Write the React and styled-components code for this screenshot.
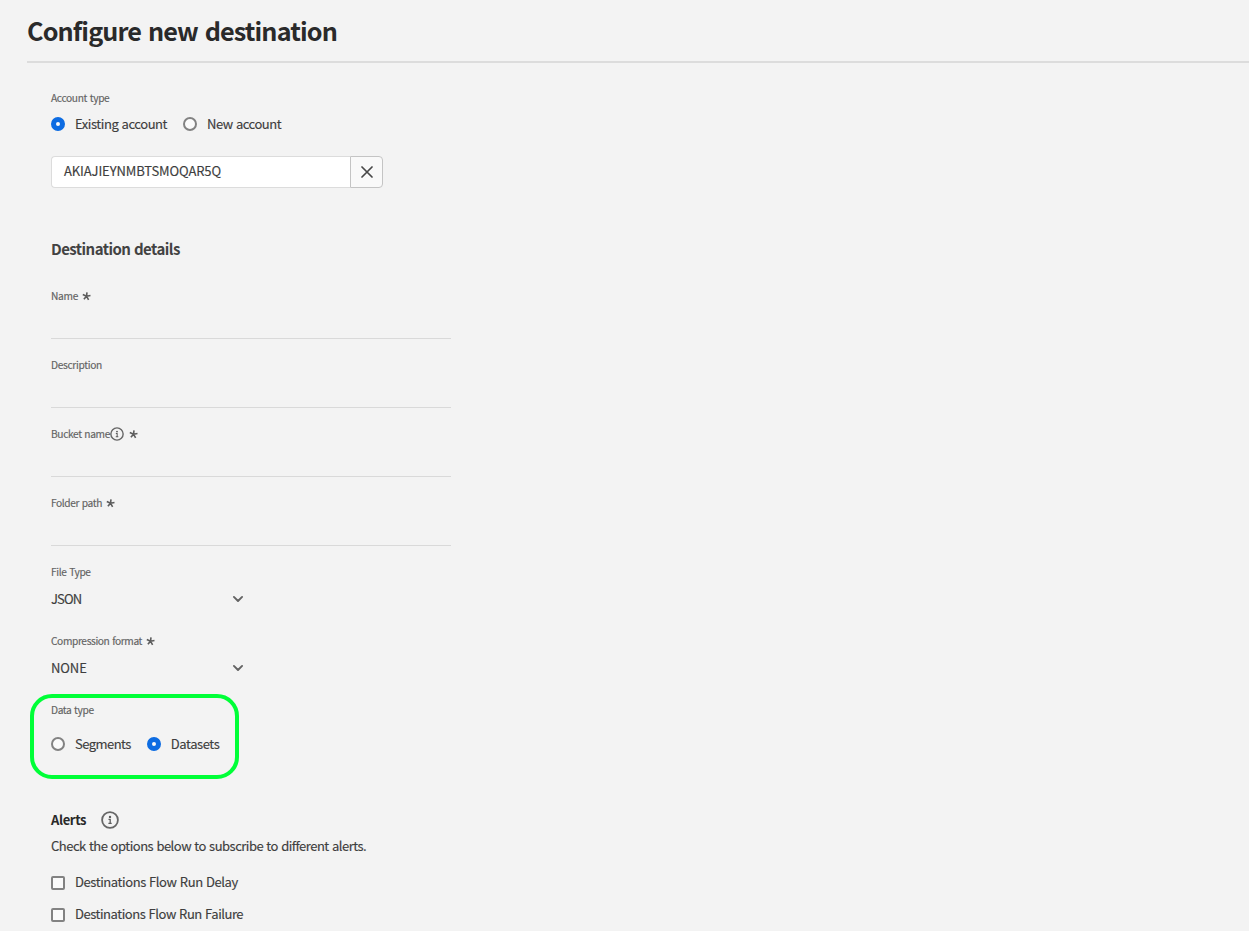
import React from 'react';
import styled, { createGlobalStyle } from 'styled-components';

const GlobalStyle = createGlobalStyle`
  * { box-sizing: border-box; }
  body {
    margin: 0;
    background: #f3f3f3;
    color: #3e3e3e;
    font-family: "Noto Sans CJK JP", "Noto Sans", sans-serif;
    font-size: 13px;
    overflow: hidden;
  }
`;

const Page = styled.main`
  height: 931px;
  padding-left: 27px;
  overflow: hidden;
`;

const Header = styled.header`
  height: 63px;
  border-bottom: 2px solid #dcdcdc;
`;

const Title = styled.h1`
  margin: 0;
  font-size: 25.2px;
  line-height: 61px;
  font-weight: 700;
  color: #2a2a2a;
  white-space: nowrap;
  word-spacing: 2px;
`;

const Text = styled.span`
  letter-spacing: ${(p) => p.$ls ?? -0.44}px;
  white-space: nowrap;
  -webkit-text-stroke: ${(p) => (p.$plain ? 0 : 0.15)}px currentColor;
`;

const Form = styled.form`
  display: flex;
  flex-direction: column;
  align-items: flex-start;
  padding: 27px 0 0 24px;
  word-spacing: 0.8px;
`;

const Label = styled.div`
  display: flex;
  align-items: center;
  height: 16px;
  font-size: 10.2px;
  line-height: 16px;
  color: #626262;
`;

const RadioGroup = styled.div`
  display: flex;
  align-items: center;
  gap: 16px;
  height: 20px;
  margin-top: ${(p) => p.$top}px;
`;

const Option = styled.label`
  display: flex;
  align-items: center;
  gap: 10px;
  height: 20px;
  line-height: 20px;
`;

const Radio = styled.span`
  width: 14px;
  height: 14px;
  border-radius: 50%;
  background: #fafafa;
  border: ${(p) => (p.$on ? '5px solid #0d6ce2' : '2px solid #828282')};
`;

const Checkbox = styled.span`
  width: 14px;
  height: 14px;
  border: 2px solid #828282;
  border-radius: 2px;
  background: #fafafa;
`;

const AccountPicker = styled.div`
  display: flex;
  width: 332px;
  height: 32px;
  margin-top: 22px;
`;

const AccountValue = styled.div`
  flex: 1;
  padding-left: 12px;
  line-height: 28px;
  background: #fff;
  border: 1px solid #dcdcdc;
  border-right: 0;
  border-radius: 4px 0 0 4px;
`;

const ClearButton = styled.button`
  display: flex;
  align-items: center;
  justify-content: center;
  width: 33px;
  padding: 0;
  background: #f9f9f9;
  border: 1px solid #c4c4c4;
  border-radius: 0 4px 4px 0;
`;

const SectionTitle = styled.h2`
  margin: 50px 0 0;
  height: 23px;
  font-size: 15px;
  line-height: 22px;
  font-weight: 700;
  color: #424242;
`;

const Fields = styled.div`
  margin-top: 27px;
`;

const Field = styled.div`
  width: 400px;
  height: 51px;
  margin-bottom: 18px;
  border-bottom: 1px solid #d9d9d9;
`;

const SelectField = styled.div`
  width: 193px;
  height: ${(p) => (p.$last ? 61 : 69)}px;
`;

const SelectValue = styled.div`
  display: flex;
  align-items: center;
  justify-content: space-between;
  height: 20px;
  margin-top: 9px;
  line-height: 20px;
`;

const Highlight = styled.section`
  width: 209px;
  height: 85px;
  margin: 0 0 0 -21px;
  padding: 4px 0 0 17px;
  border: 4px solid #00ff37;
  border-radius: 22px;
`;

const AlertsHead = styled.div`
  display: flex;
  align-items: center;
  gap: 15px;
  height: 20px;
  margin-top: 31px;
  line-height: 20px;
  font-weight: 700;
  color: #292929;
`;

const Hint = styled.p`
  margin: 6px 0 0;
  height: 20px;
  line-height: 20px;
`;

const CheckList = styled.div`
  display: flex;
  flex-direction: column;
  gap: 12px;
  margin-top: 17px;
`;

const CheckText = styled(Text)`
  margin-top: -2px;
`;

const Star = styled.svg`
  margin-left: ${(p) => p.$gap || 4}px;
`;

function Asterisk({ gap }) {
  return (
    <Star $gap={gap} width="9" height="10" viewBox="0 0 9 10" stroke="#5c5c5c" strokeWidth="1.6" fill="none">
      <path d="M4.5 5.2L5 1.3M4.5 5.2L.8 3.6M4.5 5.2L8.5 4.5M4.5 5.2L1.9 8.3M4.5 5.2L6.6 8.8" />
    </Star>
  );
}

function InfoIcon({ size, ring = 1.8 }) {
  return (
    <svg width={size} height={size} viewBox="0 0 18 18" fill="none">
      <circle cx="9" cy="9" r="7.9" stroke="#666" strokeWidth={ring} />
      <circle cx="9" cy="5.9" r="1.2" fill="#5c5c5c" />
      <path d="M7.5 8.4H9.2V12.4M7.4 12.4H10.7" stroke="#5c5c5c" strokeWidth="1.3" />
    </svg>
  );
}

function Chevron() {
  return (
    <svg width="12" height="8" viewBox="0 0 12 8" fill="none">
      <path d="M1.9 1.9L6 6L10.1 1.9" stroke="#636363" strokeWidth="1.9" strokeLinecap="round" strokeLinejoin="round" />
    </svg>
  );
}

function RadioOption({ on, ls, children }) {
  return (
    <Option>
      <Radio $on={on} />
      <Text $ls={ls}>{children}</Text>
    </Option>
  );
}

export default function App() {
  return (
    <Page>
      <GlobalStyle />
      <Header>
        <Title><Text $plain $ls={-0.86}>Configure new destination</Text></Title>
      </Header>
      <Form>
        <Label><Text $ls={-0.36}>Account type</Text></Label>
        <RadioGroup $top={8}>
          <RadioOption on>Existing account</RadioOption>
          <RadioOption ls={-0.48}>New account</RadioOption>
        </RadioGroup>
        <AccountPicker>
          <AccountValue><Text $ls={-0.11}>AKIAJIEYNMBTSMOQAR5Q</Text></AccountValue>
          <ClearButton type="button" aria-label="Clear">
            <svg width="12" height="12" viewBox="0 0 12 12" stroke="#484848" strokeWidth="1.7" strokeLinecap="round">
              <path d="M1 1L11 11M11 1L1 11" />
            </svg>
          </ClearButton>
        </AccountPicker>
        <SectionTitle><Text $plain $ls={-0.56}>Destination details</Text></SectionTitle>
        <Fields>
          <Field><Label><Text $ls={-0.3}>Name</Text><Asterisk /></Label></Field>
          <Field><Label><Text $ls={-0.32}>Description</Text></Label></Field>
          <Field><Label><Text $ls={-0.37}>Bucket name</Text><InfoIcon size={14} /><Asterisk gap={5} /></Label></Field>
          <Field><Label><Text $ls={-0.39}>Folder path</Text><Asterisk /></Label></Field>
          <SelectField>
            <Label><Text $ls={-0.38}>File Type</Text></Label>
            <SelectValue><Text $ls={-0.9}>JSON</Text><Chevron /></SelectValue>
          </SelectField>
          <SelectField $last>
            <Label><Text $ls={-0.38}>Compression format</Text><Asterisk /></Label>
            <SelectValue><Text $ls={-0.1}>NONE</Text><Chevron /></SelectValue>
          </SelectField>
        </Fields>
        <Highlight>
          <Label><Text $ls={-0.38}>Data type</Text></Label>
          <RadioGroup $top={16}>
            <RadioOption ls={-0.54}>Segments</RadioOption>
            <RadioOption on>Datasets</RadioOption>
          </RadioGroup>
        </Highlight>
        <AlertsHead><Text $plain $ls={-0.37}>Alerts</Text><InfoIcon size={18} /></AlertsHead>
        <Hint><Text $ls={-0.5}>Check the options below to subscribe to different alerts.</Text></Hint>
        <CheckList>
          <Option><Checkbox /><CheckText $ls={-0.42}>Destinations Flow Run Delay</CheckText></Option>
          <Option><Checkbox /><CheckText $ls={-0.46}>Destinations Flow Run Failure</CheckText></Option>
        </CheckList>
      </Form>
    </Page>
  );
}
